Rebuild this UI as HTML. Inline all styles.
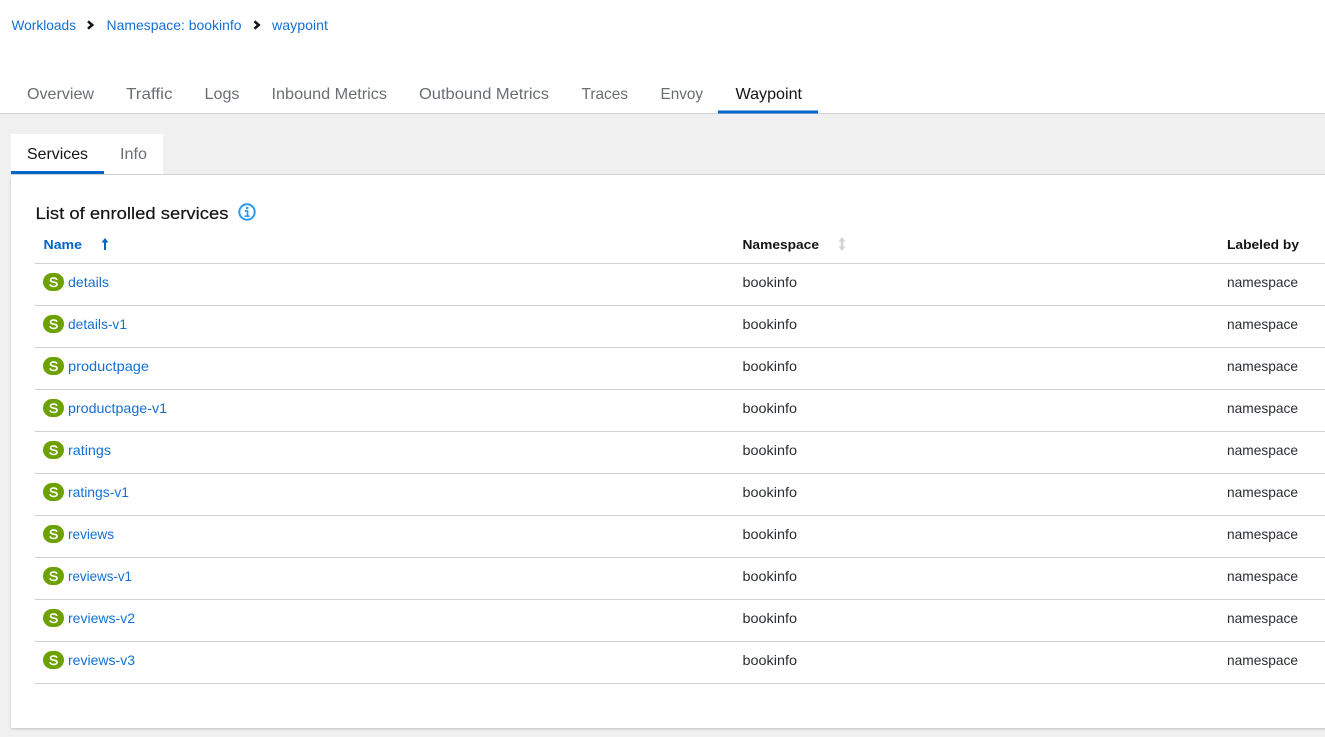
<!DOCTYPE html>
<html lang="en">
<head>
<meta charset="utf-8">
<title>Waypoint</title>
<style>
html,body{margin:0;padding:0;width:1325px;height:737px;overflow:hidden;background:#fff}
svg{display:block;position:absolute;left:0;top:0}
text{font-family:"Liberation Sans",sans-serif;font-size:14px}
.l{fill:#1470d4}
.t{fill:#6a6e73;font-size:16px}
.a{fill:#151515;font-size:16px}
.d{fill:#2a2d33}
.h{font-size:13px;font-weight:bold;fill:#151515}
.s{fill:#fff;font-size:14px;stroke:#fff;stroke-width:.45px}
.r{fill:#d2d2d2}
</style>
</head>
<body>
<svg width="1325" height="737" viewBox="0 0 1325 737" xmlns="http://www.w3.org/2000/svg">
<defs>
<filter id="sh" x="-2%" y="-2%" width="104%" height="104%"><feDropShadow dx="0" dy="1" stdDeviation="1.2" flood-color="#000" flood-opacity=".2"/></filter>
</defs>
<rect width="1325" height="737" fill="#fff"/>
<!-- breadcrumb -->
<text class="l" x="11.5" y="30" textLength="64.5" lengthAdjust="spacingAndGlyphs">Workloads</text>
<path d="M88 21.3l4.200 3.700-4.200 3.700" fill="none" stroke="#151515" stroke-width="2.600"/>
<text class="l" x="106.5" y="30" textLength="135" lengthAdjust="spacingAndGlyphs">Namespace: bookinfo</text>
<path d="M254.500 21.3l4.200 3.700-4.200 3.700" fill="none" stroke="#151515" stroke-width="2.600"/>
<text class="l" x="272" y="30" textLength="56" lengthAdjust="spacingAndGlyphs">waypoint</text>
<!-- main tabs -->
<text class="t" x="27" y="99" textLength="67" lengthAdjust="spacingAndGlyphs">Overview</text>
<text class="t" x="126" y="99" textLength="46.500" lengthAdjust="spacingAndGlyphs">Traffic</text>
<text class="t" x="204.500" y="99" textLength="35" lengthAdjust="spacingAndGlyphs">Logs</text>
<text class="t" x="271.500" y="99" textLength="115.500" lengthAdjust="spacingAndGlyphs">Inbound Metrics</text>
<text class="t" x="419" y="99" textLength="130" lengthAdjust="spacingAndGlyphs">Outbound Metrics</text>
<text class="t" x="581.500" y="99" textLength="46.500" lengthAdjust="spacingAndGlyphs">Traces</text>
<text class="t" x="660.500" y="99" textLength="42.500" lengthAdjust="spacingAndGlyphs">Envoy</text>
<text class="a" x="735.500" y="99" textLength="66.500" lengthAdjust="spacingAndGlyphs">Waypoint</text>
<!-- grey page section -->
<rect x="0" y="113" width="1325" height="624" fill="#f0f0f0"/>
<rect x="0" y="113" width="1325" height="1" fill="#d2d2d2"/>
<rect x="718" y="110.500" width="100" height="3" fill="#0066cc"/>
<!-- card -->
<rect x="11" y="177" width="1330" height="551" fill="#fff" filter="url(#sh)"/>
<rect x="11" y="175" width="1314" height="6" fill="#fff"/>
<!-- sub tabs -->
<rect x="11" y="134" width="152" height="40" fill="#fff"/>
<rect x="11" y="174" width="1314" height="1" fill="#d2d2d2"/>
<rect x="11" y="171" width="93" height="3" fill="#0066cc"/>
<text class="a" x="27" y="159" textLength="61" lengthAdjust="spacingAndGlyphs">Services</text>
<text class="t" x="120" y="159" textLength="27" lengthAdjust="spacingAndGlyphs">Info</text>
<!-- heading -->
<text x="35.500" y="219" fill="#151515" stroke="#151515" stroke-width=".2" style="font-size:17px" textLength="193" lengthAdjust="spacingAndGlyphs">List of enrolled services</text>
<circle cx="247" cy="212" r="7.700" fill="none" stroke="#2b9af3" stroke-width="2"/>
<path d="M244.800 211h2.700v5M244.600 216.200h5" fill="none" stroke="#2b9af3" stroke-width="1.700"/>
<circle cx="247.200" cy="208" r="1.300" fill="#2b9af3"/>
<!-- table header -->
<text class="h" x="43.500" y="249" style="fill:#0066cc" textLength="38.500" lengthAdjust="spacingAndGlyphs">Name</text>
<path d="M105 241v9" stroke="#0066cc" stroke-width="2" fill="none"/>
<path d="M101.500 242.500L105 238l3.500 4.500z" fill="#0066cc"/>
<text class="h" x="742.500" y="249" textLength="76.500" lengthAdjust="spacingAndGlyphs">Namespace</text>
<path d="M842 239v10" stroke="#d2d2d2" stroke-width="2.400" fill="none"/>
<path d="M838.500 241.500L842 237l3.500 4.500zM838.500 246.500l3.500 4.500 3.500-4.500z" fill="#d2d2d2"/>
<text class="h" x="1227" y="249" textLength="72" lengthAdjust="spacingAndGlyphs">Labeled by</text>
<!-- rows -->
<rect class="r" x="35" y="263" width="1290" height="1"/>
<rect class="r" x="35" y="305" width="1290" height="1"/>
<rect class="r" x="35" y="347" width="1290" height="1"/>
<rect class="r" x="35" y="389" width="1290" height="1"/>
<rect class="r" x="35" y="431" width="1290" height="1"/>
<rect class="r" x="35" y="473" width="1290" height="1"/>
<rect class="r" x="35" y="515" width="1290" height="1"/>
<rect class="r" x="35" y="557" width="1290" height="1"/>
<rect class="r" x="35" y="599" width="1290" height="1"/>
<rect class="r" x="35" y="641" width="1290" height="1"/>
<rect class="r" x="35" y="683" width="1290" height="1"/>

<rect x="43" y="273" width="21" height="18" rx="9" fill="#6ca100"/><text class="s" x="53.500" y="287" text-anchor="middle">S</text>
<text class="l" x="68" y="287" textLength="41" lengthAdjust="spacingAndGlyphs">details</text>
<text class="d" x="742.500" y="287" textLength="54.500" lengthAdjust="spacingAndGlyphs">bookinfo</text>
<text class="d" x="1227" y="287" textLength="71" lengthAdjust="spacingAndGlyphs">namespace</text>

<rect x="43" y="315" width="21" height="18" rx="9" fill="#6ca100"/><text class="s" x="53.500" y="329" text-anchor="middle">S</text>
<text class="l" x="68" y="329" textLength="59" lengthAdjust="spacingAndGlyphs">details-v1</text>
<text class="d" x="742.500" y="329" textLength="54.500" lengthAdjust="spacingAndGlyphs">bookinfo</text>
<text class="d" x="1227" y="329" textLength="71" lengthAdjust="spacingAndGlyphs">namespace</text>

<rect x="43" y="357" width="21" height="18" rx="9" fill="#6ca100"/><text class="s" x="53.500" y="371" text-anchor="middle">S</text>
<text class="l" x="68" y="371" textLength="81" lengthAdjust="spacingAndGlyphs">productpage</text>
<text class="d" x="742.500" y="371" textLength="54.500" lengthAdjust="spacingAndGlyphs">bookinfo</text>
<text class="d" x="1227" y="371" textLength="71" lengthAdjust="spacingAndGlyphs">namespace</text>

<rect x="43" y="399" width="21" height="18" rx="9" fill="#6ca100"/><text class="s" x="53.500" y="413" text-anchor="middle">S</text>
<text class="l" x="68" y="413" textLength="99" lengthAdjust="spacingAndGlyphs">productpage-v1</text>
<text class="d" x="742.500" y="413" textLength="54.500" lengthAdjust="spacingAndGlyphs">bookinfo</text>
<text class="d" x="1227" y="413" textLength="71" lengthAdjust="spacingAndGlyphs">namespace</text>

<rect x="43" y="441" width="21" height="18" rx="9" fill="#6ca100"/><text class="s" x="53.500" y="455" text-anchor="middle">S</text>
<text class="l" x="68" y="455" textLength="43" lengthAdjust="spacingAndGlyphs">ratings</text>
<text class="d" x="742.500" y="455" textLength="54.500" lengthAdjust="spacingAndGlyphs">bookinfo</text>
<text class="d" x="1227" y="455" textLength="71" lengthAdjust="spacingAndGlyphs">namespace</text>

<rect x="43" y="483" width="21" height="18" rx="9" fill="#6ca100"/><text class="s" x="53.500" y="497" text-anchor="middle">S</text>
<text class="l" x="68" y="497" textLength="61" lengthAdjust="spacingAndGlyphs">ratings-v1</text>
<text class="d" x="742.500" y="497" textLength="54.500" lengthAdjust="spacingAndGlyphs">bookinfo</text>
<text class="d" x="1227" y="497" textLength="71" lengthAdjust="spacingAndGlyphs">namespace</text>

<rect x="43" y="525" width="21" height="18" rx="9" fill="#6ca100"/><text class="s" x="53.500" y="539" text-anchor="middle">S</text>
<text class="l" x="68" y="539" textLength="46" lengthAdjust="spacingAndGlyphs">reviews</text>
<text class="d" x="742.500" y="539" textLength="54.500" lengthAdjust="spacingAndGlyphs">bookinfo</text>
<text class="d" x="1227" y="539" textLength="71" lengthAdjust="spacingAndGlyphs">namespace</text>

<rect x="43" y="567" width="21" height="18" rx="9" fill="#6ca100"/><text class="s" x="53.500" y="581" text-anchor="middle">S</text>
<text class="l" x="68" y="581" textLength="64" lengthAdjust="spacingAndGlyphs">reviews-v1</text>
<text class="d" x="742.500" y="581" textLength="54.500" lengthAdjust="spacingAndGlyphs">bookinfo</text>
<text class="d" x="1227" y="581" textLength="71" lengthAdjust="spacingAndGlyphs">namespace</text>

<rect x="43" y="609" width="21" height="18" rx="9" fill="#6ca100"/><text class="s" x="53.500" y="623" text-anchor="middle">S</text>
<text class="l" x="68" y="623" textLength="67" lengthAdjust="spacingAndGlyphs">reviews-v2</text>
<text class="d" x="742.500" y="623" textLength="54.500" lengthAdjust="spacingAndGlyphs">bookinfo</text>
<text class="d" x="1227" y="623" textLength="71" lengthAdjust="spacingAndGlyphs">namespace</text>

<rect x="43" y="651" width="21" height="18" rx="9" fill="#6ca100"/><text class="s" x="53.500" y="665" text-anchor="middle">S</text>
<text class="l" x="68" y="665" textLength="67" lengthAdjust="spacingAndGlyphs">reviews-v3</text>
<text class="d" x="742.500" y="665" textLength="54.500" lengthAdjust="spacingAndGlyphs">bookinfo</text>
<text class="d" x="1227" y="665" textLength="71" lengthAdjust="spacingAndGlyphs">namespace</text>
</svg>
</body>
</html>
